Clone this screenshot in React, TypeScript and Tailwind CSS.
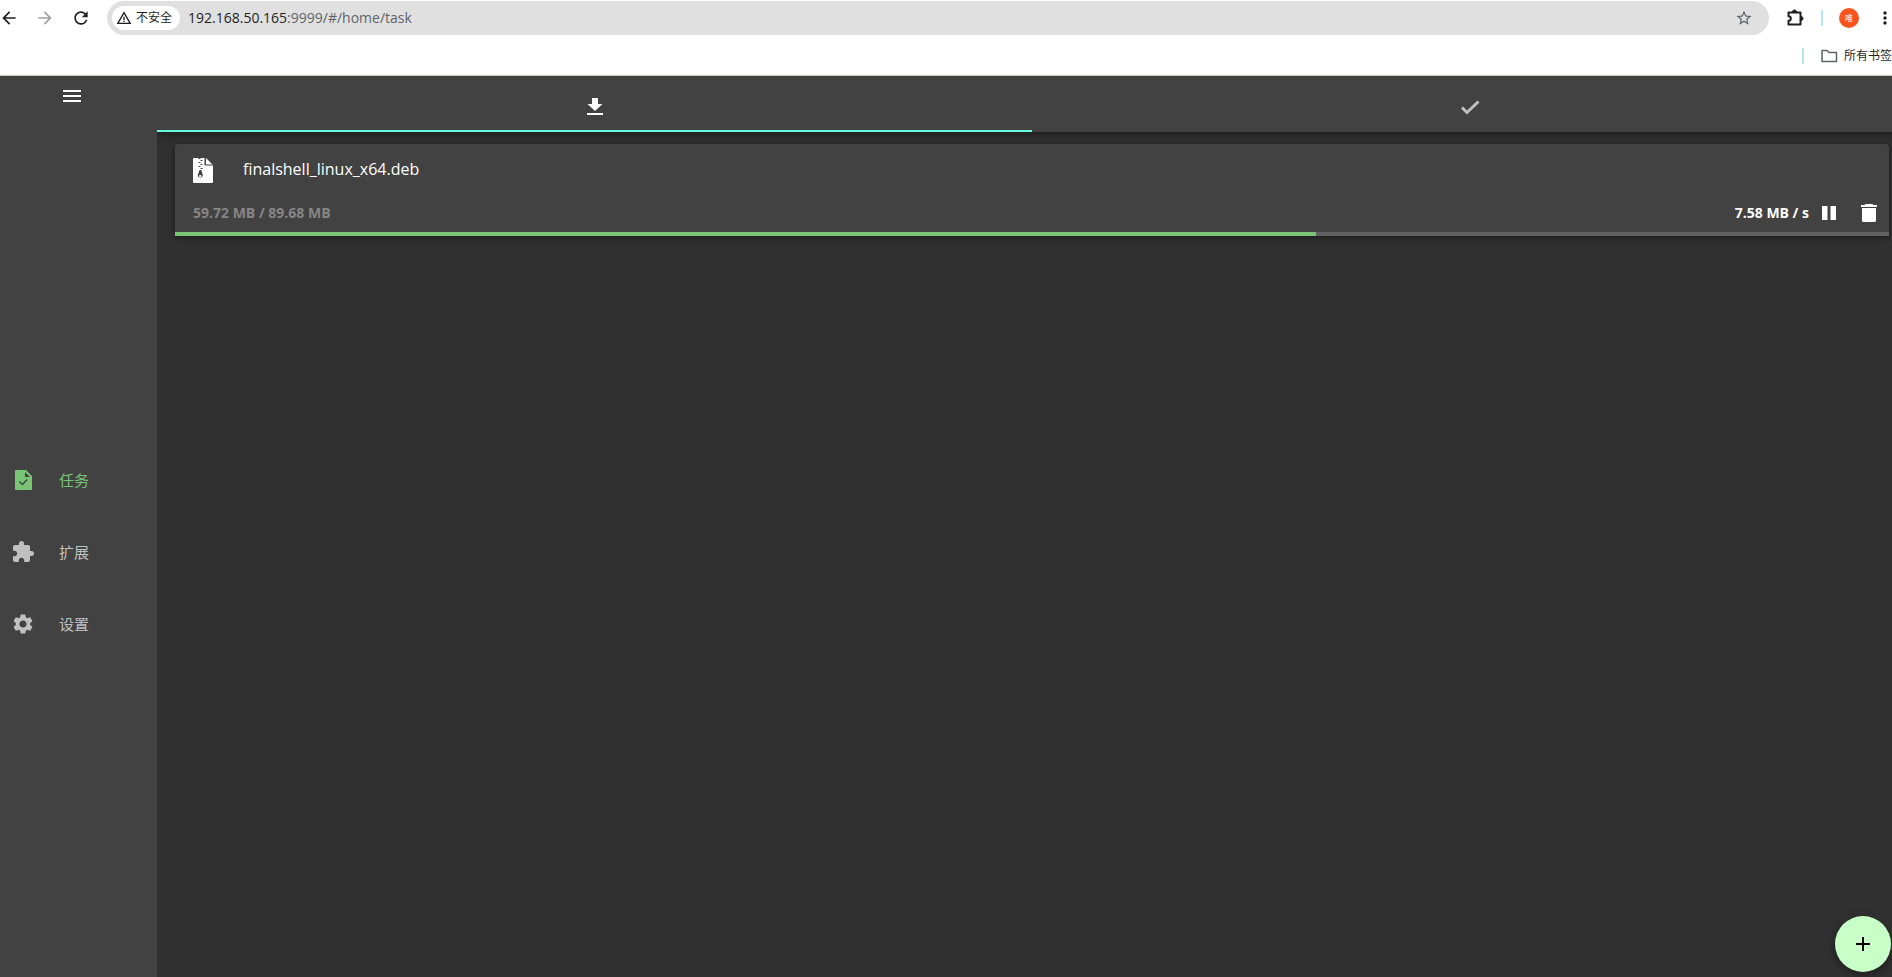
import { useState } from 'react';
import { MdAdd, MdArrowBack, MdArrowForward, MdExtension, MdMenu, MdMoreVert, MdRefresh, MdSettings, MdStarBorder, MdWarningAmber } from 'react-icons/md';

const tasks = [
  { name: 'finalshell_linux_x64.deb', size: '59.72 MB / 89.68 MB', speed: '7.58 MB / s', progress: 66.57 },
];

const ArchiveIcon = () => (
  <svg viewBox="0 0 20 26" className="h-[26px] w-5" aria-hidden="true">
    <path d="M1 1h10.500v7.500H20V25a1 1 0 0 1-1 1H1a1 1 0 0 1-1-1V2a1 1 0 0 1 1-1zM13 1l6.500 6.500H13z" fill="currentColor" />
    <path d="M5.500 1.500h2M7.500 3.500h2M5.500 5.500h2M7.500 7.500h2M5.500 9.500h2M7.500 11.500h2" stroke="#424242" />
    <path d="M6.500 13h1.800l1.500 5a2.500 2.500 0 1 1-5 0z" fill="#424242" />
    <rect x="6" y="18" width="2.500" height="2" rx="1" fill="currentColor" />
  </svg>
);

const TaskIcon = () => (
  <svg viewBox="0 0 24 24" className="h-6 w-6" fill="currentColor" aria-hidden="true">
    <path
      fillRule="evenodd"
      d="M5 2h10l6 6v13a1 1 0 0 1-1 1H5a1 1 0 0 1-1-1V3a1 1 0 0 1 1-1zm9 2v5h5l-5-5zM8.900 13l-1 1 3.400 3.400 5.400-5.400-1-1-4.400 4.400z"
    />
  </svg>
);

const DownloadIcon = () => (
  <svg viewBox="0 0 24 24" className="h-6 w-6" fill="currentColor" aria-hidden="true">
    <path d="M9 3h6v6h4.500L12 16 4.500 9H9zM4 18h16v2H4z" />
  </svg>
);

const DoneIcon = () => (
  <svg viewBox="0 0 24 24" className="h-6 w-6" fill="none" stroke="currentColor" strokeWidth="3" aria-hidden="true">
    <path d="M4 12.500l5 5L20.500 6.500" />
  </svg>
);

const PauseIcon = () => (
  <svg viewBox="0 0 24 24" className="h-6 w-6" fill="currentColor" aria-hidden="true">
    <path d="M5 5h5.500v14H5zM13.500 5H19v14h-5.500z" />
  </svg>
);

const TrashIcon = () => (
  <svg viewBox="0 0 24 24" className="h-6 w-6" fill="currentColor" aria-hidden="true">
    <path d="M5 7h14v12.500a1.500 1.500 0 0 1-1.500 1.500h-11A1.500 1.500 0 0 1 5 19.500zM8.500 3h7l1 1H20v2H4V4h3.500z" />
  </svg>
);

const PuzzleIcon = () => (
  <svg viewBox="0 0 20 20" className="h-5 w-5" aria-hidden="true">
    <path
      d="M3.500 4.500h12v12h-12v-3.700a2.300 2.300 0 0 0 0-4.600z"
      fill="none"
      stroke="currentColor"
      strokeWidth="2"
      strokeLinejoin="round"
    />
    <path d="M7.500 4a2 2 0 0 1 4 0zM16 8.500a2 2 0 0 1 0 4z" fill="currentColor" stroke="currentColor" />
  </svg>
);

const FolderIcon = () => (
  <svg viewBox="0 0 18 16" className="h-4 w-[18px]" fill="none" stroke="currentColor" strokeWidth="1.500" aria-hidden="true">
    <path d="M2 2.500h5l2 2h7.500v9H2z" strokeLinejoin="round" />
  </svg>
);

const navItems = [
  { id: 'task', label: '任务', icon: <TaskIcon /> },
  { id: 'extension', label: '扩展', icon: <MdExtension className="h-6 w-6" /> },
  { id: 'setting', label: '设置', icon: <MdSettings className="h-6 w-6" /> },
];

const BrowserBar = () => (
  <header className="relative z-20 shrink-0 border-b border-[#c2cbc4] bg-white text-[#1f1f1f]">
    <div className="flex h-9 items-center">
      <div className="flex w-[107px] shrink-0 items-center gap-4">
        <button type="button" aria-label="Back" className="-ml-px">
          <MdArrowBack className="h-5 w-5" />
        </button>
        <button type="button" aria-label="Forward" className="text-[#a0a0a0]">
          <MdArrowForward className="h-5 w-5" />
        </button>
        <button type="button" aria-label="Reload">
          <MdRefresh className="h-5 w-5" />
        </button>
      </div>
      <div className="flex h-[34px] min-w-0 flex-1 items-center rounded-full bg-[#e0e0e0] pr-4 pl-[5px]">
        <button type="button" className="flex h-6 w-[68px] shrink-0 items-center gap-1 rounded-full bg-white pl-1 text-xs">
          <MdWarningAmber className="h-4 w-4" />
          不安全
        </button>
        <p className="ml-2 flex-1 text-sm whitespace-nowrap text-[#5f6368]">
          <span className="text-[#1f1f1f]">192.168.50.165</span>:9999/#/home/task
        </p>
        <button type="button" aria-label="Bookmark" className="text-[#5f6368]">
          <MdStarBorder className="h-[18px] w-[18px]" />
        </button>
      </div>
      <div className="flex shrink-0 items-center pl-4">
        <button type="button" aria-label="Extensions">
          <PuzzleIcon />
        </button>
        <span className="mx-4 h-4 w-0.5 bg-[#b5e5f2]" />
        <button type="button" aria-label="Profile" className="flex h-5 w-5 items-center justify-center rounded-full bg-[#f9541c] text-[8px] text-white">
          唯
        </button>
        <button type="button" aria-label="More" className="-mr-[3px] ml-4">
          <MdMoreVert className="h-5 w-5" />
        </button>
      </div>
    </div>
    <div className="flex h-[39px] items-center justify-end">
      <span className="mr-4 h-4 w-0.5 bg-[#b5e5f2]" />
      <button type="button" className="flex items-center gap-1.5 text-xs whitespace-nowrap">
        <span className="text-[#5f6368]">
          <FolderIcon />
        </span>
        所有书签
      </button>
    </div>
  </header>
);

const Sidebar = () => {
  const [active, setActive] = useState('task');

  return (
    <aside className="z-10 flex w-[157px] shrink-0 flex-col bg-[#424242]">
      <button type="button" aria-label="Menu" className="mt-2 ml-[60px] self-start text-white">
        <MdMenu className="h-6 w-6" />
      </button>
      <nav className="flex flex-1 flex-col justify-center gap-6 pt-2">
        {navItems.map((item) => (
          <button
            key={item.id}
            type="button"
            onClick={() => setActive(item.id)}
            className={`flex h-12 items-center gap-6 pl-[11px] text-[15px] ${
              active === item.id ? 'text-[#79c476]' : 'text-[#c0c0c0]'
            }`}
          >
            {item.icon}
            {item.label}
          </button>
        ))}
      </nav>
    </aside>
  );
};

const App = () => {
  const [tab, setTab] = useState('running');

  return (
    <div className="flex h-screen flex-col overflow-hidden font-['Open_Sans','Noto_Sans_CJK_SC',sans-serif]">
      <BrowserBar />
      {/* The app view runs a little past the right and bottom window edges */}
      <div className="-mr-[15px] -mb-[11px] flex min-h-0 flex-1 bg-[#303030] text-white">
        <Sidebar />
        <main className="relative flex min-w-0 flex-1 flex-col">
          <div role="tablist" className="grid h-14 grid-cols-2 bg-[#424242] shadow-[0_2px_8px_rgba(0,0,0,0.45)]">
            <button
              type="button"
              role="tab"
              aria-label="Downloading"
              aria-selected={tab === 'running'}
              onClick={() => setTab('running')}
              className={`flex items-center justify-center border-b-2 pt-2 ${
                tab === 'running' ? 'border-[#64ffda] text-white' : 'border-transparent text-[#c0c0c0]'
              }`}
            >
              <DownloadIcon />
            </button>
            <button
              type="button"
              role="tab"
              aria-label="Done"
              aria-selected={tab === 'done'}
              onClick={() => setTab('done')}
              className={`flex items-center justify-center border-b-2 pt-2 ${
                tab === 'done' ? 'border-[#64ffda] text-white' : 'border-transparent text-[#c0c0c0]'
              }`}
            >
              <DoneIcon />
            </button>
          </div>

          <ul className="px-[18px] pt-3">
            {tasks.map((task) => (
              <li key={task.name} className="rounded-t bg-[#424242] shadow-[0_2px_6px_rgba(0,0,0,0.45)]">
                <div className="flex h-[52px] items-center gap-[30px] pl-[18px]">
                  <ArchiveIcon />
                  <span className="pb-0.5 text-base">{task.name}</span>
                </div>
                <div className="flex h-9 items-center justify-between pr-2 pb-0.5 pl-[18px] text-sm font-bold">
                  <span className="text-[#868686]">{task.size}</span>
                  <div className="flex items-center">
                    <span>{task.speed}</span>
                    <button type="button" aria-label="Pause" className="ml-2">
                      <PauseIcon />
                    </button>
                    <button type="button" aria-label="Delete" className="ml-4">
                      <TrashIcon />
                    </button>
                  </div>
                </div>
                <div className="h-1 bg-[#616161]">
                  <div className="h-full bg-[#79c476]" style={{ width: `${task.progress}%` }} />
                </div>
              </li>
            ))}
          </ul>

          <button
            type="button"
            aria-label="Add task"
            className="absolute right-4 bottom-4 flex h-14 w-14 items-center justify-center rounded-full bg-[#c8ffc8] text-black shadow-[0_3px_8px_rgba(0,0,0,0.4)]"
          >
            <MdAdd className="h-6 w-6" />
          </button>
        </main>
      </div>
    </div>
  );
};

export default App;
